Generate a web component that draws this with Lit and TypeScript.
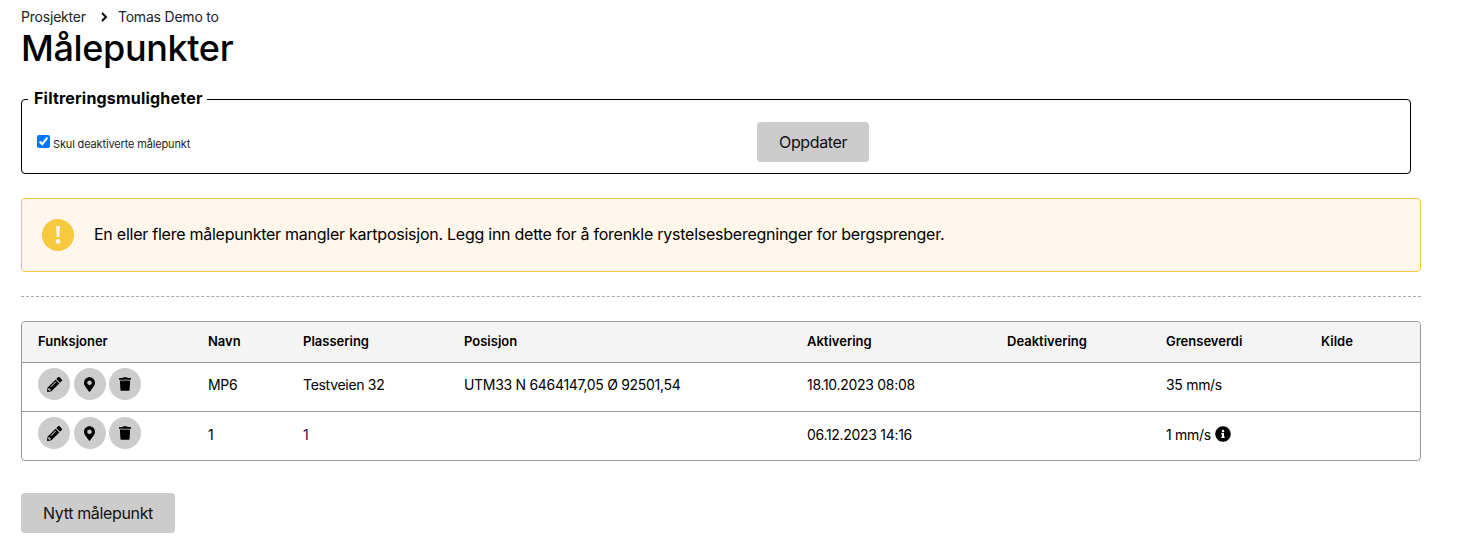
import { LitElement, html, css, svg } from 'lit';
import { customElement } from 'lit/decorators.js';

const icon = (d: string, vb: string, cls: string) =>
  html`<svg class=${cls} viewBox=${vb}>${svg`<path d=${d}></path>`}</svg>`;

const EDIT = 'M497.9 142.1l-46.1 46.1c-4.7 4.7-12.3 4.7-17 0l-111-111c-4.7-4.7-4.7-12.3 0-17l46.1-46.1c18.7-18.7 49.1-18.7 67.9 0l60.1 60.1c18.8 18.7 18.8 49.1 0 67.9zM284.2 99.8L21.6 362.4.4 483.9c-2.9 16.4 11.4 30.6 27.8 27.8l121.5-21.3 262.6-262.6c4.7-4.7 4.7-12.3 0-17l-111-111c-4.8-4.7-12.4-4.7-17.1 0zM124.1 339.9c-5.5-5.5-5.5-14.3 0-19.8l154-154c5.5-5.5 14.3-5.5 19.8 0s5.5 14.3 0 19.8l-154 154c-5.5 5.5-14.3 5.5-19.8 0zM88 424h48v36.3l-64.5 11.3-31.1-31.1L51.7 376H88v48z';
const PLACE = 'M172.268 501.67C26.97 291.031 0 269.413 0 192 0 85.961 85.961 0 192 0s192 85.961 192 192c0 77.413-26.97 99.031-172.268 309.67-9.535 13.774-29.93 13.773-39.464 0zM192 272c44.183 0 80-35.817 80-80s-35.817-80-80-80-80 35.817-80 80 35.817 80 80 80z';
const TRASH = 'M432 32H312l-9.4-18.7A24 24 0 0 0 281.1 0H166.8a23.72 23.72 0 0 0-21.4 13.3L136 32H16A16 16 0 0 0 0 48v32a16 16 0 0 0 16 16h416a16 16 0 0 0 16-16V48a16 16 0 0 0-16-16zM53.2 467a48 48 0 0 0 47.9 45h245.8a48 48 0 0 0 47.9-45L416 128H32z';
const INFO = 'M256 8C119.043 8 8 119.083 8 256c0 136.997 111.043 248 248 248s248-111.003 248-248C504 119.083 392.957 8 256 8zm0 110c23.196 0 42 18.804 42 42s-18.804 42-42 42-42-18.804-42-42 18.804-42 42-42zm56 254c0 6.627-5.373 12-12 12h-88c-6.627 0-12-5.373-12-12v-24c0-6.627 5.373-12 12-12h12v-64h-12c-6.627 0-12-5.373-12-12v-24c0-6.627 5.373-12 12-12h64c6.627 0 12 5.373 12 12v100h12c6.627 0 12 5.373 12 12v24z';

const rows = [
  { navn: 'MP6', plassering: 'Testveien 32', posisjon: 'UTM33 N 6464147,05 Ø 92501,54', aktivering: '18.10.2023 08:08', grense: '35 mm/s', info: false },
  { navn: '1', plassering: '1', posisjon: '', aktivering: '06.12.2023 14:16', grense: '1 mm/s', info: true },
];

@customElement('app-root')
export class AppRoot extends LitElement {
  static styles = css`
    :host {
      display: block;
      font-family: Inter, "Liberation Sans", sans-serif;
      color: #000;
      box-sizing: border-box;
      width: 1421px;
      padding: 8px 0 0 21px;
    }
    .crumbs {
      display: flex;
      align-items: center;
      font-size: 14px;
      line-height: 18px;
      color: #222;
      letter-spacing: -0.2px;
    }
    .crumbs svg {
      width: 8px;
      height: 10px;
      margin: 0 10px 0 14px;
    }
    h1 {
      margin: 0;
      font-size: 36px;
      line-height: 44px;
      font-weight: 500;
      letter-spacing: -0.01em;
    }
    fieldset {
      margin: 19px 10px 0 0;
      padding: 0 0 0 15px;
      height: 85px;
      box-sizing: border-box;
      border: 1px solid #000;
      border-radius: 4px;
      display: block;
    }
    legend {
      font-size: 16px;
      font-weight: 700;
      letter-spacing: 0.2px;
      margin-left: -9px;
      padding: 0 4px 2px 6px;
      line-height: 18px;
    }
    .filter {
      display: grid;
      grid-template-columns: 720px auto;
      align-items: center;
      padding-top: 13px;
    }
    label {
      display: flex;
      align-items: baseline;
      font-size: 11px;
      letter-spacing: -0.15px;
      color: #222;
      padding-top: 2px;
    }
    label input {
      margin: 0 3px 1px 0;
      width: 13px;
      height: 13px;
    }
    button.main {
      border: 0;
      background: #ccc;
      border-radius: 4px;
      height: 40px;
      padding: 0 22px;
      font: inherit;
      font-size: 16px;
      letter-spacing: -0.35px;
      color: #111;
      justify-self: start;
    }
    .alert {
      margin-top: 24px;
      height: 74px;
      box-sizing: border-box;
      display: flex;
      align-items: center;
      gap: 20px;
      padding-left: 20px;
      background: #fff7eb;
      border: 1px solid #f6c93f;
      border-radius: 4px;
      font-size: 16px;
      letter-spacing: -0.25px;
    }
    .alert svg {
      width: 32px;
      height: 32px;
    }
    .alert span {
      padding-bottom: 2px;
    }
    .sep {
      margin: 24px 0;
      border-top: 1px dashed #aaa;
    }
    table {
      width: 100%;
      table-layout: fixed;
      border-collapse: separate;
      border-spacing: 0;
      border: 1px solid #999;
      border-radius: 4px;
      font-size: 14px;
      letter-spacing: -0.3px;
    }
    th {
      background: #f4f4f4;
      text-align: left;
      font-weight: 600;
      font-size: 13px;
      letter-spacing: 0;
      box-sizing: border-box;
      height: 41px;
      padding: 0 0 2px 16px;
      border-bottom: 1px solid #999;
    }
    th:first-child { border-top-left-radius: 4px; }
    th:last-child { border-top-right-radius: 4px; }
    td {
      box-sizing: border-box;
      height: 49px;
      padding: 0 0 5px 16px;
      border-bottom: 1px solid #999;
    }
    tr:last-child td { border-bottom: 0; height: 48px; padding-bottom: 4px; }
    .acts {
      display: flex;
      gap: 3.5px;
      margin-bottom: 1px;
    }
    tr:last-child .acts { margin-bottom: 2px; }
    .round {
      width: 32px;
      height: 32px;
      border-radius: 50%;
      border: 0;
      padding: 0;
      background: #ccc;
      display: flex;
      align-items: center;
      justify-content: center;
    }
    .pen { width: 15px; height: 15px; }
    .pin { width: 11px; height: 15px; }
    .bin { width: 12px; height: 14px; }
    .lim {
      display: flex;
      align-items: center;
      gap: 4px;
    }
    .nfo {
      width: 16px;
      height: 16px;
    }
    .bottom {
      margin-top: 32px;
      display: block;
    }
    .link { color: #2a0a3a; }
  `;

  render() {
    return html`
      <div class="crumbs">
        <span>Prosjekter</span>
        <svg viewBox="0 0 8 10"><path d="M2 1l4 4-4 4" fill="none" stroke="#000" stroke-width="2"></path></svg>
        <span>Tomas Demo to</span>
      </div>
      <h1>Målepunkter</h1>
      <fieldset>
        <legend>Filtreringsmuligheter</legend>
        <div class="filter">
          <label><input type="checkbox" checked />Skul deaktiverte målepunkt</label>
          <button class="main">Oppdater</button>
        </div>
      </fieldset>
      <div class="alert">
        <svg viewBox="0 0 32 32">
          <circle cx="16" cy="16" r="16" fill="#f6c93f"></circle>
          <path d="M14 7h4l-.7 11h-2.6z" fill="#fff7eb"></path>
          <circle cx="16" cy="22.5" r="2.4" fill="#fff7eb"></circle>
        </svg>
        <span>En eller flere målepunkter mangler kartposisjon. Legg inn dette for å forenkle rystelsesberegninger for bergsprenger.</span>
      </div>
      <div class="sep"></div>
      <table>
        <colgroup>
          <col style="width:170px" /><col style="width:95px" /><col style="width:161px" /><col style="width:343px" />
          <col style="width:200px" /><col style="width:159px" /><col style="width:155px" /><col />
        </colgroup>
        <thead>
          <tr>
            <th>Funksjoner</th><th>Navn</th><th>Plassering</th><th>Posisjon</th>
            <th>Aktivering</th><th>Deaktivering</th><th>Grenseverdi</th><th>Kilde</th>
          </tr>
        </thead>
        <tbody>
          ${rows.map((r) => html`
            <tr>
              <td>
                <div class="acts">
                  <button class="round">${icon(EDIT, '0 0 512 512', 'pen')}</button>
                  <button class="round">${icon(PLACE, '0 0 384 512', 'pin')}</button>
                  <button class="round">${icon(TRASH, '0 0 448 512', 'bin')}</button>
                </div>
              </td>
              <td>${r.navn}</td>
              <td class=${r.info ? 'link' : ''}>${r.plassering}</td>
              <td>${r.posisjon}</td>
              <td>${r.aktivering}</td>
              <td></td>
              <td>
                <div class="lim">
                  ${r.grense}
                  ${r.info ? icon(INFO, '0 0 512 512', 'nfo') : ''}
                </div>
              </td>
              <td></td>
            </tr>
          `)}
        </tbody>
      </table>
      <div class="bottom"><button class="main">Nytt målepunkt</button></div>
    `;
  }
}
